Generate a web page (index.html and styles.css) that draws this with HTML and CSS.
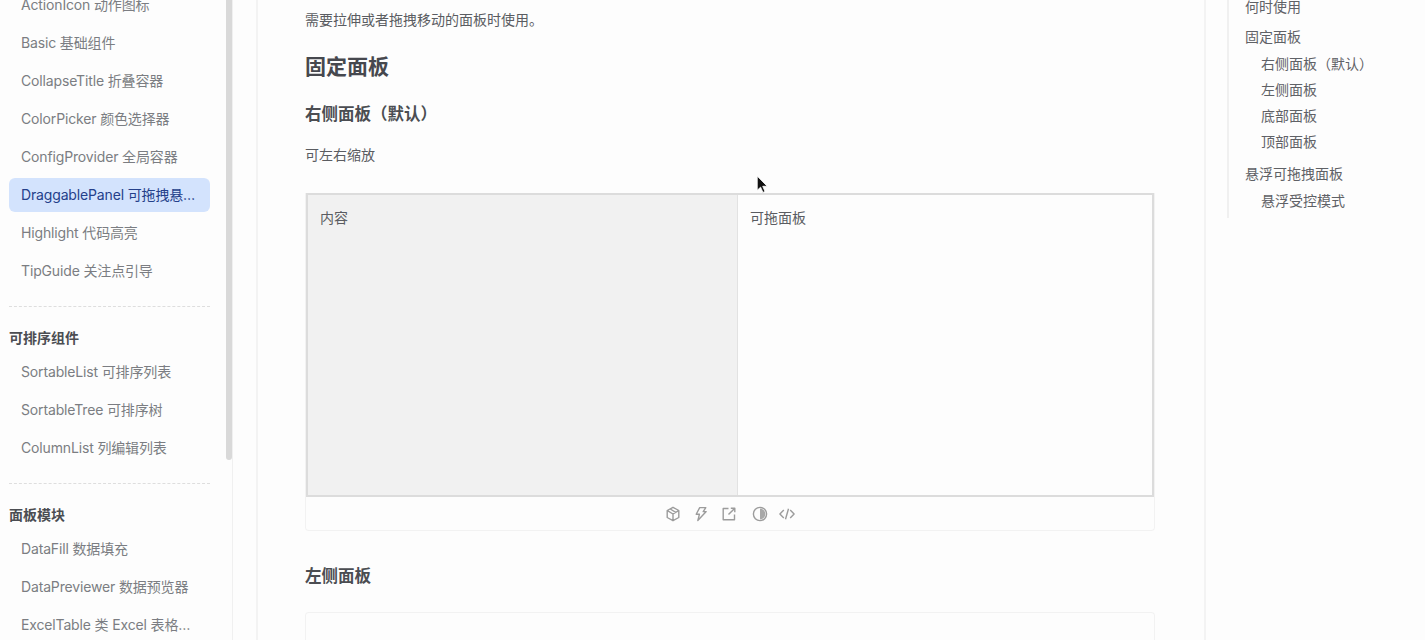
FILE: index.html
```html
<!DOCTYPE html>
<html lang="zh-CN">
<head>
    <meta charset="UTF-8">
    <title>DraggablePanel 可拖拽悬浮面板</title>
    <link rel="stylesheet" href="styles.css">
</head>
<body>
<div class="layout">
    <aside class="sidebar">
        <nav class="menu">
            <ul class="menu-list">
                <li>ActionIcon 动作图标</li>
                <li>Basic 基础组件</li>
                <li>CollapseTitle 折叠容器</li>
                <li>ColorPicker 颜色选择器</li>
                <li>ConfigProvider 全局容器</li>
                <li class="active">DraggablePanel 可拖拽悬浮面板</li>
                <li>Highlight 代码高亮</li>
                <li>TipGuide 关注点引导</li>
            </ul>
            <div class="menu-divider"></div>
            <div class="menu-title">可排序组件</div>
            <ul class="menu-list">
                <li>SortableList 可排序列表</li>
                <li>SortableTree 可排序树</li>
                <li>ColumnList 列编辑列表</li>
            </ul>
            <div class="menu-divider"></div>
            <div class="menu-title">面板模块</div>
            <ul class="menu-list">
                <li>DataFill 数据填充</li>
                <li>DataPreviewer 数据预览器</li>
                <li>ExcelTable 类 Excel 表格组件</li>
            </ul>
        </nav>
        <div class="scrollbar"><div class="thumb"></div></div>
    </aside>

    <main class="content">
        <p class="lead">需要拉伸或者拖拽移动的面板时使用。</p>
        <h2>固定面板</h2>
        <h3>右侧面板（默认）</h3>
        <p class="desc">可左右缩放</p>

        <div class="demo">
            <div class="preview">
                <div class="pane-main">内容</div>
                <div class="pane-side">可拖面板</div>
            </div>
            <div class="actions">
                <svg class="icon" viewBox="0 0 16 16"><path d="M8 1.3l5.8 3.2v7L8 14.7l-5.8-3.2v-7zM2.4 4.7L8 8l5.6-3.3M8 8v6.5M5.2 3l5.6 3.3"/></svg>
                <svg class="icon" viewBox="0 0 16 16"><path d="M6.7 1.6h6.1l-2.6 4h3l-8.4 9 1.6-6.3H3.2z"/></svg>
                <svg class="icon" viewBox="0 0 16 16"><path d="M7.5 2.5H2.2v11.3h11.3V8.5M9.8 2.2h4v4M13.6 2.4L7.5 8.5"/></svg>
                <svg class="icon icon-contrast" viewBox="0 0 16 16"><circle cx="8" cy="8" r="6.6"/><path class="fill" d="M8 2.6a5.4 5.4 0 0 1 0 10.8z"/></svg>
                <svg class="icon" viewBox="0 0 16 16"><path d="M4.8 4L.9 8l3.9 4M11.2 4l3.9 4-3.9 4M9.5 2.8L6.5 13.2"/></svg>
            </div>
        </div>

        <h3 class="next">左侧面板</h3>
        <div class="demo demo-next"></div>
    </main>

    <aside class="toc">
        <ul class="toc-list">
            <li class="toc-top">何时使用</li>
            <li>固定面板
                <ul>
                    <li>右侧面板（默认）</li>
                    <li>左侧面板</li>
                    <li>底部面板</li>
                    <li>顶部面板</li>
                </ul>
            </li>
            <li>悬浮可拖拽面板
                <ul>
                    <li>悬浮受控模式</li>
                </ul>
            </li>
        </ul>
    </aside>
</div>

<svg class="cursor" viewBox="0 0 12 18"><path d="M1 1v13.5l3.2-3 2.2 5 2-.9-2.2-4.9h4.3z"/></svg>
</body>
</html>
```

FILE: styles.css
```css
*{
    margin: 0;
    padding: 0;
    box-sizing: border-box;
}
ul{
    list-style: none;
}
html, body{
    height: 640px;
    overflow: hidden;
}
body{
    background-color: #fdfdfd;
    color: #5a5c61;
    font-family: Inter, "Noto Sans CJK SC", sans-serif;
    font-size: 14px;
}
.layout{
    display: flex;
    height: 640px;
    overflow: hidden;
}

/* 左侧菜单 */
.sidebar{
    display: flex;
    flex: none;
    width: 233px;
    height: 640px;
    border-right: 1px solid #f0f0f0;
    overflow: hidden;
}
.menu{
    flex: none;
    width: 226px;
    margin-top: -12px;
    padding-left: 9px;
}
.menu-list li{
    width: 201px;
    height: 34px;
    margin-bottom: 4px;
    padding: 0 14px 0 12px;
    border-radius: 6px;
    color: #7b7d82;
    letter-spacing: -0.15px;
    line-height: 34px;
    white-space: nowrap;
    overflow: hidden;
    text-overflow: ellipsis;
}
.menu-list li.active{
    background-color: #d3e3fd;
    color: #24408a;
}
.menu-divider{
    width: 201px;
    margin: 18px 0 16px;
    border-top: 1px dashed #dedede;
}
.menu-title{
    height: 30px;
    margin-bottom: 2px;
    color: #4b4d52;
    font-weight: 600;
    line-height: 30px;
}
.scrollbar{
    flex: none;
    width: 6px;
}
.thumb{
    height: 460px;
    background-color: #d9d9d9;
    border-radius: 0 0 3px 3px;
}

/* 中间内容 */
.content{
    flex: none;
    width: 950px;
    height: 640px;
    margin-left: 23px;
    padding: 0 49px 0 47px;
    border-left: 2px solid #f3f3f3;
    border-right: 2px solid #f3f3f3;
    overflow: hidden;
}
.lead{
    margin-top: 10px;
    line-height: 20px;
}
h2{
    margin-top: 21px;
    color: #46484e;
    font-size: 21px;
    font-weight: 600;
    line-height: 32px;
}
h3{
    margin-top: 19px;
    color: #4b4d52;
    font-size: 16.5px;
    font-weight: 600;
    line-height: 24px;
}
.desc{
    margin-top: 18px;
    line-height: 22px;
}
.demo{
    height: 338px;
    margin-top: 27px;
    border: 1px solid #f2f2f2;
    border-top: 0;
    border-radius: 0 0 4px 4px;
}
.preview{
    display: flex;
    height: 304px;
    border: 2px solid #dcdcdc;
}
.pane-main{
    flex: none;
    width: 430px;
    padding: 12px;
    background-color: #f1f1f1;
    border-right: 1px solid #e2e2e2;
}
.pane-side{
    flex: 1;
    padding: 12px;
    background-color: #fdfdfd;
}
.actions{
    display: flex;
    justify-content: center;
    align-items: center;
    gap: 12px;
    height: 33px;
}
.icon{
    width: 16px;
    height: 16px;
    fill: none;
    stroke: #9c9c9c;
    stroke-width: 1.4;
    stroke-linejoin: round;
}
.icon .fill{
    fill: #a8a8a8;
    stroke: none;
}
.icon-contrast{
    margin-left: 3px;
    margin-right: -1px;
}
.next{
    margin-top: 33px;
}
.demo-next{
    height: 60px;
    margin-top: 24px;
    border: 1px solid #f2f2f2;
    border-bottom: 0;
    border-radius: 4px 4px 0 0;
}

/* 右侧目录 */
.toc{
    flex: none;
    width: 198px;
    height: 218px;
    margin-left: 21px;
    padding-left: 16px;
    border-left: 2px solid #f0f0f0;
    color: #5f6166;
    line-height: 26px;
}
.toc-list{
    margin-top: -6px;
}
.toc-list > li{
    margin-bottom: 6px;
}
.toc-list > li.toc-top{
    margin-bottom: 4px;
}
.toc-list ul{
    margin-top: 1px;
    padding-left: 16px;
}
.toc-list ul li{
    height: 26px;
}

/* 录屏里的鼠标 */
.cursor{
    position: absolute;
    left: 756px;
    top: 175px;
    width: 13px;
    height: 19px;
    fill: #111111;
    stroke: #ffffff;
    stroke-width: 0.8;
}
```
